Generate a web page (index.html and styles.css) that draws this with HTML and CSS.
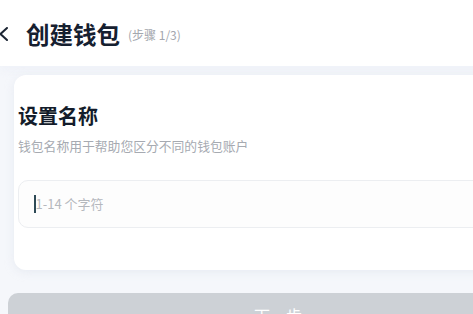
FILE: index.html
```html
<!DOCTYPE html>
<html lang="zh-CN">
<head>
<meta charset="utf-8">
<title>创建钱包</title>
<link rel="stylesheet" href="styles.css">
</head>
<body>
<div class="page">
  <header class="header">
    <span class="back">
      <svg width="9" height="14" viewBox="0 0 9 14"><path d="M8 1 L1.5 7 L8 13" fill="none" stroke="#1c2533" stroke-width="2" stroke-linecap="round" stroke-linejoin="round"/></svg>
    </span>
    <h1 class="title">创建钱包</h1>
    <span class="step">(步骤 1/3)</span>
  </header>
  <main class="main">
    <section class="card">
      <h2 class="card-title">设置名称</h2>
      <p class="card-desc">钱包名称用于帮助您区分不同的钱包账户</p>
      <div class="input">
        <span class="caret"></span>
        <span class="placeholder">1-14 个字符</span>
      </div>
    </section>
    <button class="next" type="button">下一步</button>
  </main>
</div>
</body>
</html>
```

FILE: styles.css
```css
html, body {
  margin: 0;
  padding: 0;
  background: #f5f7fb;
  overflow: hidden;
}
body {
  font-family: "Noto Sans CJK SC", "Noto Sans", "Liberation Sans", sans-serif;
  color: #141d2b;
}
.page {
  width: 560px;
}
.header {
  height: 66px;
  background: #ffffff;
  display: flex;
  align-items: center;
  box-shadow: 0 4px 8px rgba(235, 238, 246, 0.6);
}
.back {
  display: flex;
  width: 27px;
  margin-left: -1px;
  padding-top: 1px;
}
.title {
  margin: 0;
  font-size: 23.5px;
  line-height: 30px;
  font-weight: 700;
  color: #162030;
  letter-spacing: 0;
  padding-top: 1px;
}
.step {
  margin-left: 8px;
  font-size: 12px;
  line-height: 16px;
  color: #a3a7ae;
  padding-top: 3px;
}
.main {
  padding: 9px 0 0 0;
}
.card {
  margin-left: 14px;
  width: 528px;
  background: #ffffff;
  border-radius: 12px;
  box-shadow: 0 2px 10px rgba(225, 229, 238, 0.7);
  padding: 27px 4px 42px 4px;
  box-sizing: border-box;
}
.card-title {
  margin: 0;
  font-size: 20px;
  line-height: 28px;
  font-weight: 700;
  color: #131c2a;
}
.card-desc {
  margin: 7px 0 0 0;
  font-size: 12.8px;
  line-height: 18px;
  color: #a6aab1;
}
.input {
  margin-top: 25px;
  height: 48px;
  border: 1px solid #eceef1;
  border-radius: 10px;
  background: #fdfdfd;
  display: flex;
  align-items: center;
  padding-left: 15px;
  box-sizing: border-box;
}
.caret {
  width: 1.5px;
  height: 18px;
  background: #2e4a56;
}
.placeholder {
  font-size: 13px;
  line-height: 18px;
  color: #b5b8bd;
}
.next {
  display: block;
  margin: 23px 0 0 8px;
  width: 540px;
  height: 44px;
  border: none;
  border-radius: 10px;
  background: #cdd1d6;
  color: #ffffff;
  font-family: "Noto Sans CJK SC", "Noto Sans", sans-serif;
  font-size: 16px;
  padding: 0;
}
```
